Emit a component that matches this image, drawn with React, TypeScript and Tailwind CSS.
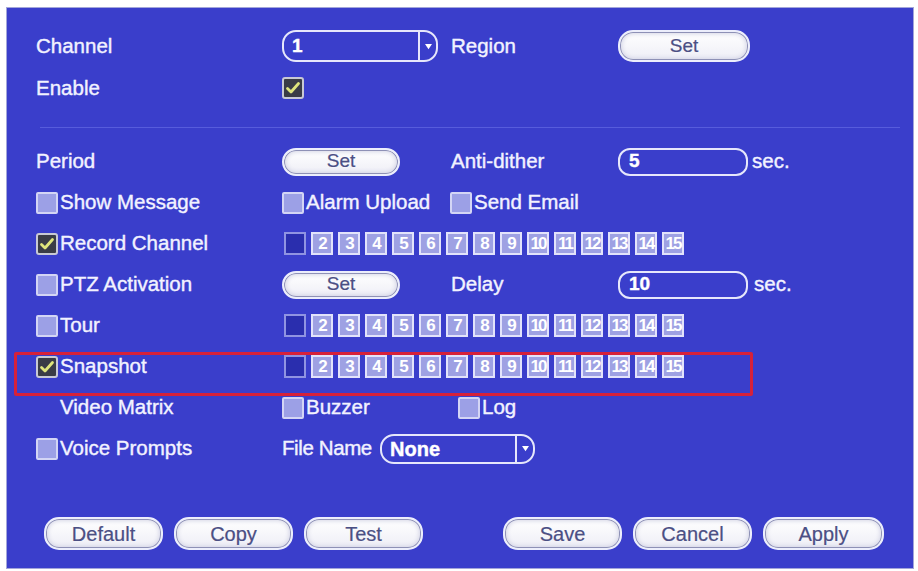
import React from "react";

const LINE = "border-[#e6e7fb]";

function Check({ on = false }: { on?: boolean }) {
  if (on) {
    return (
      <span className="flex h-[22px] w-[22px] shrink-0 items-center justify-center rounded-[3px] border-2 border-[#c8c9d4] bg-[#3a3c46]">
        <svg viewBox="0 0 16 16" className="h-[16px] w-[16px]">
          <path
            d="M2.5 8.5l3.5 3.5L13.5 3.5"
            fill="none"
            stroke="#dfe57c"
            strokeWidth="2.8"
            strokeLinecap="round"
            strokeLinejoin="round"
          />
        </svg>
      </span>
    );
  }
  return <span className="h-[22px] w-[22px] shrink-0 rounded-[2px] border-2 border-[#d3d5f5] bg-[#9ca0e6]" />;
}

function Pill({ label, className = "" }: { label: string; className?: string }) {
  return (
    <span
      className={`flex items-center justify-center rounded-[15px] border-2 border-[#eceefc] bg-[linear-gradient(#ffffff,#eeeef6)] text-[#4b4f84] shadow-[inset_0_0_0_1px_#8e91b6,inset_0_0_4px_2px_#d4d5e6] [-webkit-text-stroke:0.2px_currentColor] ${className}`}
    >
      {label}
    </span>
  );
}

function Field({ value, className = "" }: { value: string; className?: string }) {
  return (
    <span className={`flex items-center rounded-[12px] border-2 ${LINE} pl-[9px] text-[19px] font-bold text-white ${className}`}>
      {value}
    </span>
  );
}

function Select({ value, className = "" }: { value: string; className?: string }) {
  return (
    <div className={`flex items-stretch rounded-[14px] border-2 ${LINE} ${className}`}>
      <span className="flex flex-1 items-center pl-[8px] font-bold text-white">{value}</span>
      <span className={`flex w-[18px] items-center justify-center border-l-2 ${LINE}`}>
        <svg viewBox="0 0 10 8" className="h-[7px] w-[9px]">
          <path d="M1 1h8L5 7z" fill="#ffffff" />
        </svg>
      </span>
    </div>
  );
}

function Channels() {
  const nums = Array.from({ length: 15 }, (_, i) => i + 1);
  return (
    <div className="flex gap-[5px] pl-[2px]">
      {nums.map((n) =>
        n === 1 ? (
          <span key={n} className="h-[23px] w-[22px] border-2 border-[#9094e2] bg-[#2a2eae]" />
        ) : (
          <span
            key={n}
            className="flex h-[23px] w-[22px] items-center justify-center overflow-visible border-2 border-[#e2e3fb] bg-[#9ea1e3] text-[17px] font-bold tracking-[-2px] text-white [-webkit-text-stroke:0px]"
          >
            {n}
          </span>
        )
      )}
    </div>
  );
}

function Opt({ label, on, className = "" }: { label: string; on?: boolean; className?: string }) {
  return (
    <div className={`flex items-center gap-[2px] ${className}`}>
      <Check on={on} />
      <span>{label}</span>
    </div>
  );
}

export default function App() {
  return (
    <div className="h-[571px] w-[918px] bg-white pl-[6px] pt-[7px] font-['Liberation_Sans',Arial,sans-serif] text-[20.5px] text-[#f2f2ff] [-webkit-text-stroke:0.4px_currentColor]">
      <div className="relative flex h-[562px] w-[908px] flex-col border border-[#a3a6da] bg-[#3a3ecb] pl-[29px] pt-[22px]">
        {/* channel / region */}
        <div className="flex h-[32px] items-center">
          <span className="w-[246px]">Channel</span>
          <Select value="1" className="h-full w-[156px] text-[19px]" />
          <span className="ml-[13px] w-[167px]">Region</span>
          <Pill label="Set" className="h-full w-[132px] text-[19px]" />
        </div>
        <div className="mt-[10px] flex h-[32px] items-center">
          <span className="w-[246px]">Enable</span>
          <Check on />
        </div>

        <div className="ml-[4px] mt-[23px] h-px w-[860px] bg-[#575cdc]" />

        {/* event handling */}
        <div className="mt-[13px] flex h-[41px] items-center">
          <span className="w-[246px]">Period</span>
          <Pill label="Set" className="h-[28px] w-[118px] text-[19px]" />
          <span className="ml-[51px] w-[167px]">Anti-dither</span>
          <Field value="5" className="h-[28px] w-[130px]" />
          <span className="ml-[4px]">sec.</span>
        </div>
        <div className="flex h-[41px] items-center">
          <Opt label="Show Message" className="w-[246px]" />
          <Opt label="Alarm Upload" className="w-[168px]" />
          <Opt label="Send Email" />
        </div>
        <div className="flex h-[41px] items-center">
          <Opt label="Record Channel" on className="w-[246px]" />
          <Channels />
        </div>
        <div className="flex h-[41px] items-center">
          <Opt label="PTZ Activation" className="w-[246px]" />
          <Pill label="Set" className="h-[28px] w-[118px] text-[19px]" />
          <span className="ml-[51px] w-[167px]">Delay</span>
          <Field value="10" className="h-[28px] w-[130px]" />
          <span className="ml-[6px]">sec.</span>
        </div>
        <div className="flex h-[41px] items-center">
          <Opt label="Tour" className="w-[246px]" />
          <Channels />
        </div>
        <div className="flex h-[41px] items-center">
          <Opt label="Snapshot" on className="w-[246px]" />
          <Channels />
        </div>
        <div className="flex h-[41px] items-center">
          <span className="w-[246px] pl-[24px]">Video Matrix</span>
          <Opt label="Buzzer" className="w-[176px]" />
          <Opt label="Log" />
        </div>
        <div className="flex h-[41px] items-center">
          <Opt label="Voice Prompts" className="w-[246px]" />
          <span className="w-[98px] tracking-[-0.4px]">File Name</span>
          <Select value="None" className="h-[30px] w-[155px] text-[20px]" />
        </div>

        {/* footer buttons */}
        <div className="ml-[8px] mt-[48px] flex h-[33px] text-[20px]">
          <div className="flex gap-[11px]">
            <Pill label="Default" className="w-[119px]" />
            <Pill label="Copy" className="w-[119px]" />
            <Pill label="Test" className="w-[119px]" />
          </div>
          <div className="ml-[80px] flex gap-[11px]">
            <Pill label="Save" className="w-[119px]" />
            <Pill label="Cancel" className="w-[119px]" />
            <Pill label="Apply" className="w-[121px]" />
          </div>
        </div>

        {/* highlight around the snapshot row */}
        <div className="absolute left-[7px] top-[344px] h-[44px] w-[739px] rounded-[2px] border-[3px] border-[#d6213a]" />
      </div>
    </div>
  );
}
